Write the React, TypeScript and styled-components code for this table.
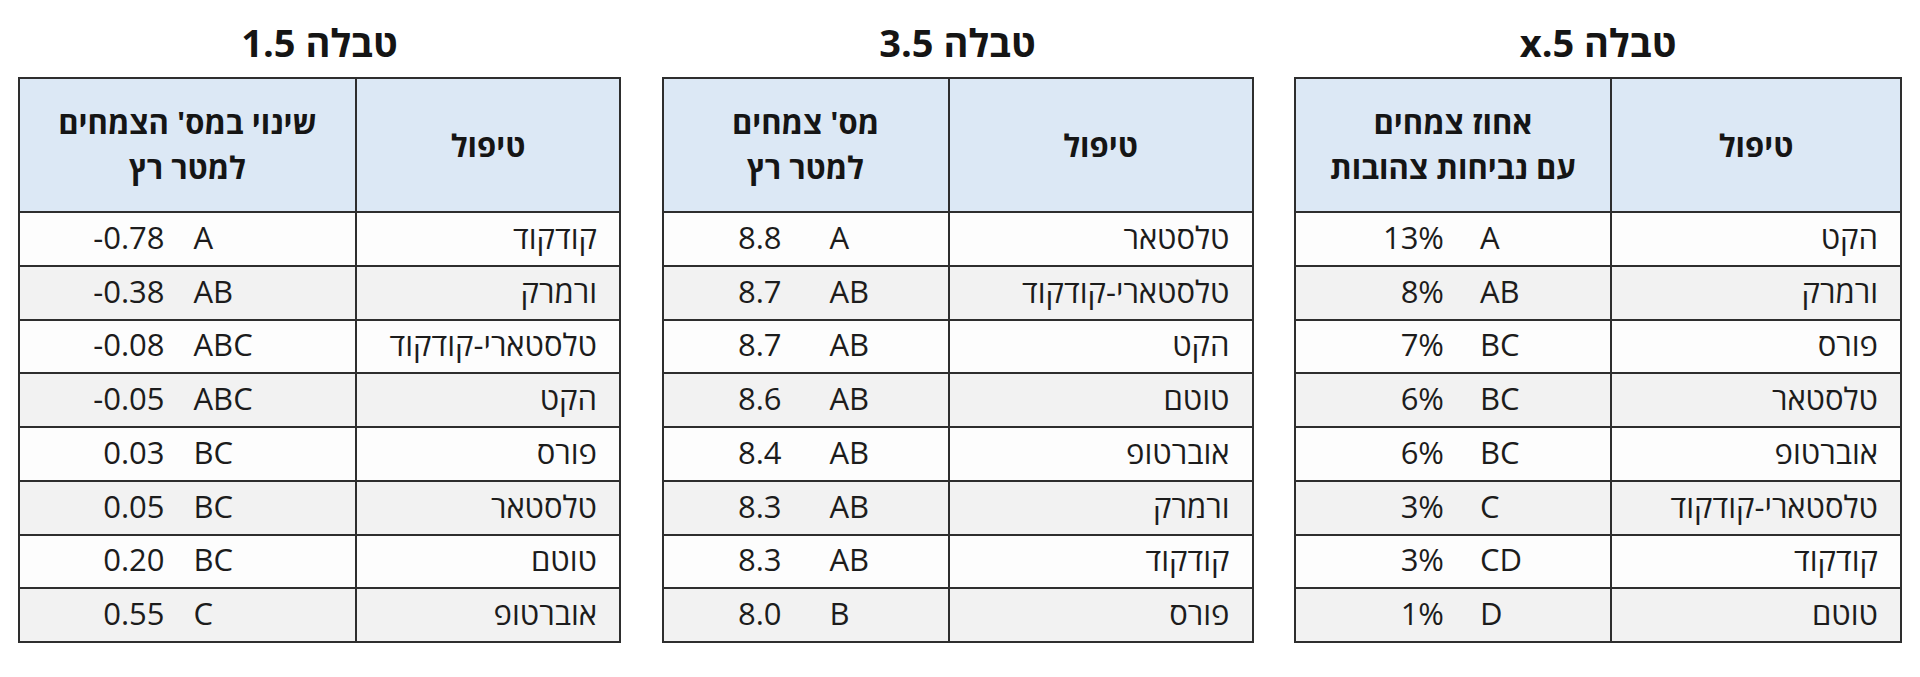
import React from "react";
import styled, {createGlobalStyle} from "styled-components";

interface IRow {
  name: string;
  value: string;
  grade: string;
}

interface ITable {
  title: string;
  head: string[];
  width: number;
  nameCol: number;
  numPad: number;
  gradePad: number;
  rows: IRow[];
}

const tables: ITable[] = [
  {
    title: "טבלה 1.5",
    head: ["שינוי במס' הצמחים", "למטר רץ"],
    width: 603,
    nameCol: 264,
    numPad: 23,
    gradePad: 6,
    rows: [
      {name: "קודקוד", value: "-0.78", grade: "A"},
      {name: "ורמרק", value: "-0.38", grade: "AB"},
      {name: "טלסטארי-קודקוד", value: "-0.08", grade: "ABC"},
      {name: "הקט", value: "-0.05", grade: "ABC"},
      {name: "פורס", value: "0.03", grade: "BC"},
      {name: "טלסטאר", value: "0.05", grade: "BC"},
      {name: "טוטם", value: "0.20", grade: "BC"},
      {name: "אוברטופ", value: "0.55", grade: "C"},
    ],
  },
  {
    title: "טבלה 3.5",
    head: ["מס' צמחים", "למטר רץ"],
    width: 592,
    nameCol: 304,
    numPad: 24,
    gradePad: 24,
    rows: [
      {name: "טלסטאר", value: "8.8", grade: "A"},
      {name: "טלסטארי-קודקוד", value: "8.7", grade: "AB"},
      {name: "הקט", value: "8.7", grade: "AB"},
      {name: "טוטם", value: "8.6", grade: "AB"},
      {name: "אוברטופ", value: "8.4", grade: "AB"},
      {name: "ורמרק", value: "8.3", grade: "AB"},
      {name: "קודקוד", value: "8.3", grade: "AB"},
      {name: "פורס", value: "8.0", grade: "B"},
    ],
  },
  {
    title: "טבלה x.5",
    head: ["אחוז צמחים", "עם נביחות צהובות"],
    width: 608,
    nameCol: 290,
    numPad: 9,
    gradePad: 27,
    rows: [
      {name: "הקט", value: "13%", grade: "A"},
      {name: "ורמרק", value: "8%", grade: "AB"},
      {name: "פורס", value: "7%", grade: "BC"},
      {name: "טלסטאר", value: "6%", grade: "BC"},
      {name: "אוברטופ", value: "6%", grade: "BC"},
      {name: "טלסטארי-קודקוד", value: "3%", grade: "C"},
      {name: "קודקוד", value: "3%", grade: "CD"},
      {name: "טוטם", value: "1%", grade: "D"},
    ],
  },
];

const DataTable = ({t}: {t: ITable}) => (
  <Block width={t.width}>
    <Title>{t.title}</Title>
    <Table>
      <colgroup>
        <col style={{width: t.nameCol}}/>
        <col/>
      </colgroup>
      <thead>
        <tr>
          <Th>טיפול</Th>
          <Th>{t.head[0]}<br/>{t.head[1]}</Th>
        </tr>
      </thead>
      <tbody>
        {t.rows.map((r, i) => (
          <Row key={i} striped={i % 2 === 1}>
            <NameCell>{r.name}</NameCell>
            <ValueCell>
              <Pair>
                <Num pad={t.numPad}>{r.value}</Num>
                <Grade pad={t.gradePad}>{r.grade}</Grade>
              </Pair>
            </ValueCell>
          </Row>
        ))}
      </tbody>
    </Table>
  </Block>
);

const App = () => (
  <>
    <GlobalStyle/>
    <Page>
      {tables.map(t => <DataTable key={t.title} t={t}/>)}
    </Page>
  </>
);

export default App;


const GlobalStyle = createGlobalStyle`
  body {
    margin: 0;
    background: #fff;
    font-family: "Open Sans", "Noto Sans", "Liberation Sans", sans-serif;
    color: #1c1c1c;
  }
`

const Page = styled.div`
  display: flex;
  justify-content: space-between;
  align-items: flex-start;
  padding: 0 18px;
  height: 677px;
  box-sizing: border-box;
`

const Block = styled.section<{width: number}>`
  width: ${({width}) => width}px;
  direction: rtl;
`

const Title = styled.h2`
  margin: 0;
  height: 77px;
  line-height: 84px;
  text-align: center;
  font-size: 38px;
  font-weight: 700;
  color: #151515;
`

const Table = styled.table`
  width: 100%;
  table-layout: fixed;
  border-collapse: collapse;
  border: 2px solid #2e2e2e;

  & td, & th {
    border: 2px solid #2e2e2e;
    padding: 0;
  }

  & td {
    padding-bottom: 4px;
  }
`

const Th = styled.th`
  height: 132px;
  background: #dce8f5;
  font-size: 31px;
  font-weight: 700;
  line-height: 45px;
  text-align: center;
  color: #151515;
`

const Row = styled.tr<{striped: boolean}>`
  height: 53.75px;
  background: ${({striped}) => striped ? "#f2f2f2" : "#fdfdfd"};
`

const NameCell = styled.td`
  font-size: 31px;
  line-height: 42px;
  text-align: right;
  padding-right: 22px !important;
`

const ValueCell = styled.td`
  font-size: 31px;
  line-height: 42px;
`

const Pair = styled.div`
  direction: ltr;
  display: grid;
  grid-template-columns: 1fr 1fr;
`

const Num = styled.span<{pad: number}>`
  text-align: right;
  padding-right: ${({pad}) => pad}px;
`

const Grade = styled.span<{pad: number}>`
  text-align: left;
  padding-left: ${({pad}) => pad}px;
`
